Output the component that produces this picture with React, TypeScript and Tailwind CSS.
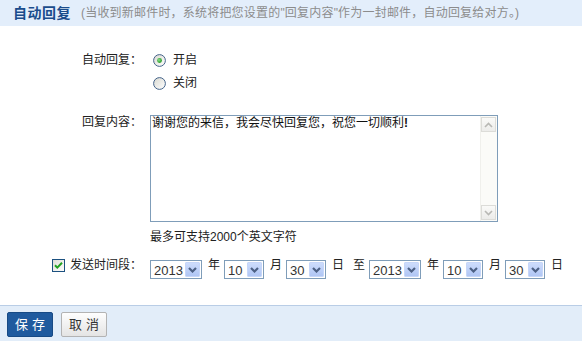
import React from "react";

function Radio({ checked }: { checked?: boolean }) {
  return (
    <svg width="13" height="13" viewBox="0 0 13 13" className="block">
      <defs>
        <linearGradient id="radioGrad" x1="0" y1="0" x2="1" y2="1">
          <stop offset="0" stopColor="#d8d8d0" />
          <stop offset="1" stopColor="#ffffff" />
        </linearGradient>
        <radialGradient id="dotGrad" cx="0.4" cy="0.4" r="0.6">
          <stop offset="0" stopColor="#8ee08e" />
          <stop offset="1" stopColor="#1f9a1f" />
        </radialGradient>
      </defs>
      <circle cx="6.5" cy="6.5" r="5.9" fill="url(#radioGrad)" stroke="#44638a" strokeWidth="1" />
      {checked && <circle cx="6.5" cy="6.5" r="2.4" fill="url(#dotGrad)" />}
    </svg>
  );
}

function Checkbox() {
  return (
    <svg width="13" height="13" viewBox="0 0 13 13" className="block">
      <defs>
        <linearGradient id="cbGrad" x1="0" y1="0" x2="1" y2="1">
          <stop offset="0" stopColor="#dcdcd4" />
          <stop offset="1" stopColor="#ffffff" />
        </linearGradient>
      </defs>
      <rect x="0.5" y="0.5" width="12" height="12" fill="url(#cbGrad)" stroke="#1c5180" />
      <path d="M3 6.2 L5.3 8.6 L10 3.8" fill="none" stroke="#21a121" strokeWidth="2" />
    </svg>
  );
}

function Chevron({ color }: { color: string }) {
  return (
    <svg width="9" height="6" viewBox="0 0 9 6" className="block">
      <path d="M1 1 L4.5 4.5 L8 1" fill="none" stroke={color} strokeWidth="2.2" />
    </svg>
  );
}

function Sel({ value, w }: { value: string; w: string }) {
  return (
    <div className={`mt-[3px] flex h-[19px] ${w} border border-[#7f9db9] bg-white`}>
      <span className="flex-1 pl-[3px] pt-[1px] text-[13px] leading-[17px] text-[#333]">{value}</span>
      <div className="m-[1px] flex w-[15px] items-center justify-center rounded-[1px] border border-[#c6d6f8] bg-gradient-to-b from-[#cddcfc] to-[#b0c6f4]">
        <Chevron color="#4d6185" />
      </div>
    </div>
  );
}

function Ch({ t, ml }: { t: string; ml: string }) {
  return <span className={`${ml} w-[12px] text-[12px] leading-[16px]`}>{t}</span>;
}

export default function App() {
  return (
    <div className="flex h-[341px] w-[582px] flex-col bg-white font-['Liberation_Sans','Noto_Sans_CJK_SC',sans-serif] text-[12px] text-[#222]">
      <div className="flex h-[26px] items-center bg-[#e3eefb] pl-[13px]">
        <span className="text-[14px] font-bold leading-[26px] tracking-[0.5px] text-[#1a4c8c]">自动回复</span>
        <span className="ml-[10px] text-[12px] leading-[26px] tracking-[0.2px] text-[#8c8c8c]">
          (当收到新邮件时，系统将把您设置的"回复内容"作为一封邮件，自动回复给对方。)
        </span>
      </div>

      <div className="flex flex-col pt-[24px]">
        <div className="flex h-[20px] items-center">
          <div className="w-[142px] text-right leading-[16px]">自动回复：</div>
          <div className="ml-[8px] flex items-center">
            <span className="ml-[3px]">
              <Radio checked />
            </span>
            <span className="ml-[7px] leading-[16px]">开启</span>
          </div>
        </div>
        <div className="mt-[3px] flex h-[20px] items-center">
          <div className="w-[142px]" />
          <div className="ml-[8px] flex items-center">
            <span className="ml-[3px]">
              <Radio />
            </span>
            <span className="ml-[7px] leading-[16px]">关闭</span>
          </div>
        </div>

        <div className="mt-[22px] flex items-start">
          <div className="-mt-[1px] w-[142px] text-right leading-[16px]">回复内容：</div>
          <div className="ml-[8px] flex h-[107px] w-[348px] border border-[#7f9db9] bg-white">
            <div className="flex-1 pl-[1px] pt-[1px] text-[12px] leading-[12px] text-[#111]">
              谢谢您的来信，我会尽快回复您，祝您一切顺利<b>!</b>
            </div>
            <div className="flex w-[17px] flex-col justify-between border-l border-[#f0f0ec] bg-[#fbfbf8] py-[1px] pr-[1px]">
              <div className="flex h-[15px] w-[15px] items-center justify-center border border-[#dcdcd8] bg-gradient-to-b from-[#fafaf8] to-[#ececea]">
                <svg width="9" height="6" viewBox="0 0 9 6" className="block">
                  <path d="M1 5 L4.5 1.5 L8 5" fill="none" stroke="#b8b8b4" strokeWidth="1.6" />
                </svg>
              </div>
              <div className="flex h-[15px] w-[15px] items-center justify-center border border-[#dcdcd8] bg-gradient-to-b from-[#fafaf8] to-[#ececea]">
                <svg width="9" height="6" viewBox="0 0 9 6" className="block">
                  <path d="M1 1 L4.5 4.5 L8 1" fill="none" stroke="#b8b8b4" strokeWidth="1.6" />
                </svg>
              </div>
            </div>
          </div>
        </div>

        <div className="mt-[7px] pl-[150px] leading-[16px]">最多可支持2000个英文字符</div>

        <div className="mt-[12px] flex items-start">
          <div className="flex w-[142px] items-center justify-end">
            <Checkbox />
            <span className="ml-[5px] leading-[16px]">发送时间段：</span>
          </div>
          <div className="ml-[8px] flex items-start">
            <Sel value="2013" w="w-[52px]" />
            <Ch t="年" ml="ml-[6px]" />
            <span className="ml-[4px]" />
            <Sel value="10" w="w-[40px]" />
            <Ch t="月" ml="ml-[6px]" />
            <span className="ml-[4px]" />
            <Sel value="30" w="w-[40px]" />
            <Ch t="日" ml="ml-[6px]" />
            <Ch t="至" ml="ml-[9px]" />
            <span className="ml-[4px]" />
            <Sel value="2013" w="w-[52px]" />
            <Ch t="年" ml="ml-[6px]" />
            <span className="ml-[4px]" />
            <Sel value="10" w="w-[40px]" />
            <Ch t="月" ml="ml-[6px]" />
            <span className="ml-[4px]" />
            <Sel value="30" w="w-[40px]" />
            <Ch t="日" ml="ml-[6px]" />
          </div>
        </div>
      </div>

      <div className="flex-1" />

      <div className="flex h-[36px] items-start gap-[8px] border-t border-[#b9cde6] bg-[#e2edf9] pl-[7px] pt-[6px]">
        <button className="flex h-[25px] w-[46px] items-center justify-center rounded-[2px] border border-[#174a85] bg-[#1f5a9e] pl-[4px] text-[13px] leading-[16px] tracking-[4px] text-white">
          保存
        </button>
        <button className="flex h-[25px] w-[46px] items-center justify-center rounded-[2px] border border-[#b3b3b3] bg-gradient-to-b from-[#fefefe] to-[#e4e4e4] pl-[4px] text-[13px] leading-[16px] tracking-[4px] text-[#333]">
          取消
        </button>
      </div>
    </div>
  );
}
